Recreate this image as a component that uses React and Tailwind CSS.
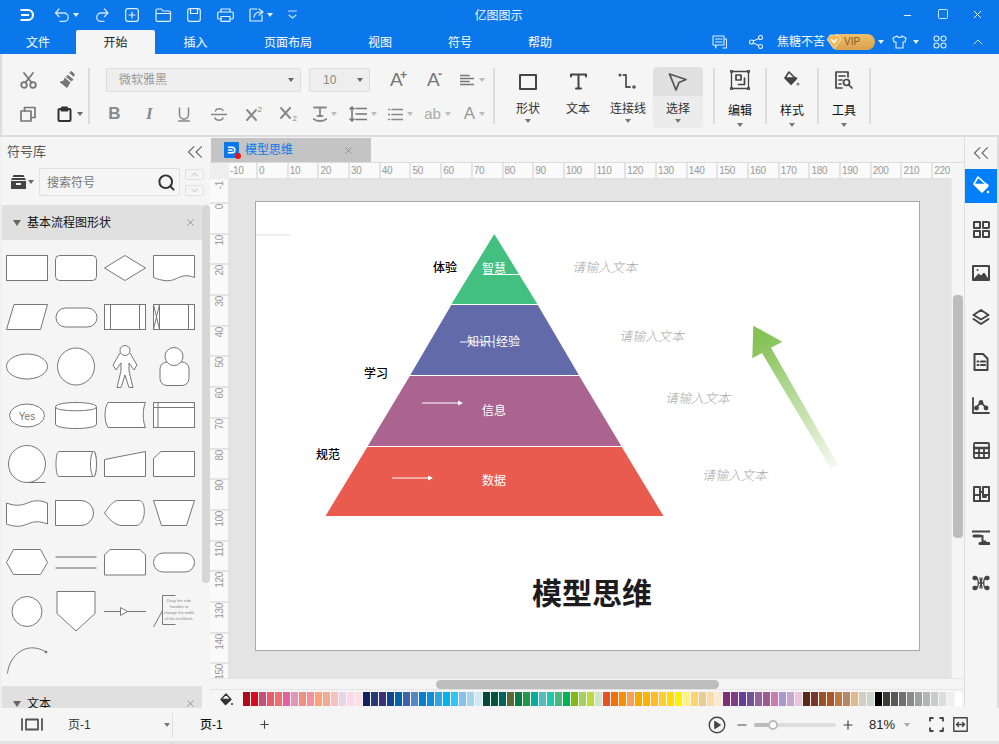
import {
  ChevronUp,
  ChevronDown,
  ChevronsLeft,
  Minus,
  Plus,
  Search,
  Square,
  X,
} from "lucide-react";

const tabs = [
  { label: "文件", w: "w-[76px]" },
  { label: "开始", w: "w-[79px]", active: true },
  { label: "插入", w: "w-[81px]" },
  { label: "页面布局", w: "w-[104px]" },
  { label: "视图", w: "w-[80px]" },
  { label: "符号", w: "w-[80px]" },
  { label: "帮助", w: "w-[80px]" },
];

const swatches = [
  "#b20a1c", "#d90b1f", "#c7507a", "#e85a6c", "#ef7074", "#e75fa0", "#e295b4", "#ef8f85", "#f3919c", "#ffa17a", "#f2ab90", "#f7c1bd", "#ead4e8", "#fdd8e8", "#fce0e6",
  "#12225a", "#263a75", "#3c3078", "#0c468e", "#0265a5", "#3f63ac", "#5587c5", "#0a7ece", "#0f8dd6", "#2ba7e2", "#02b2f0", "#30c4f6", "#8bc0e8", "#a0d6ef", "#cfe9f5",
  "#004838", "#04553a", "#01655f", "#596b30", "#0b7b48", "#229848", "#04ad9c", "#54bcbf", "#1ccba9", "#4ab97f", "#02b153", "#84b816", "#a4d063", "#bfd83e", "#cde7c6",
  "#e75223", "#f56f02", "#f68f06", "#f6a059", "#f6ab00", "#ffb100", "#ffbc29", "#fccf30", "#ffdb00", "#fff000", "#fef382", "#fed468", "#ebcb94", "#fddba6", "#fee8d0",
  "#7c2f76", "#833a85", "#65409b", "#72529b", "#95649f", "#9c5a8d", "#c97bae", "#ab96d2", "#c6a6cd", "#ecc5de",
  "#5b2818", "#78392c", "#9a5327", "#aa5528", "#c07a40", "#b58768", "#e0b98b", "#d4cdc4", "#cbd6cb",
  "#000000", "#3e3a39", "#595757", "#717071", "#898989", "#9fa0a0", "#b5b5b6", "#c9caca", "#dcdddd", "#efefef", "#ffffff",
];

const hLabels = ["0", "10", "20", "30", "40", "50", "60", "70", "80", "90", "100", "110", "120", "130", "140", "150", "160", "170", "180", "190", "200", "210", "220"];
const vLabels = ["0", "10", "20", "30", "40", "50", "60", "70", "80", "90", "100", "110", "120", "130", "140", "150"];

function Caret({ color = "border-t-[#888]" }) {
  return <span className={`inline-block w-0 h-0 border-x-[3px] border-x-transparent border-t-[4px] ${color}`} />;
}

function Ico({ w = 18, h = 18, vb, stroke = "#555", sw = 1.6, children, fill = "none" }) {
  return (
    <svg width={w} height={h} viewBox={vb || `0 0 ${w} ${h}`} fill={fill} stroke={stroke} strokeWidth={sw} strokeLinecap="round" strokeLinejoin="round">
      {children}
    </svg>
  );
}

function Logo({ color = "#fff" }) {
  return (
    <Ico w={16} h={14} stroke={color} sw={2.2}>
      <path d="M1.5 2H9a5 5 0 0 1 0 10H1.5M2 7h8" strokeLinecap="butt" />
    </Ico>
  );
}

const shapes = [
  <rect x="0.5" y="11.5" width="41" height="25" />,
  <rect x="0.5" y="11.5" width="41" height="25" rx="4" />,
  <path d="M21 11.5 41.5 24 21 36.5 .5 24z" />,
  <path d="M.5 11.5h41v22c-8-3-12-2-18 1-8 4-15 2-23-1z" />,
  <path d="M8 11.5h33.5l-7 25H.5z" />,
  <rect x="1" y="15" width="41" height="19" rx="9.5" />,
  <g><rect x="0.5" y="11.5" width="41" height="25" /><path d="M6.5 11.5v25M35.5 11.5v25" /></g>,
  <g><rect x="0.5" y="11.5" width="41" height="25" /><path d="M6.5 11.5v25M35.5 11.5v25M.5 11.5l6 25M6.5 11.5l-6 25" /></g>,
  <ellipse cx="21" cy="24.5" rx="20.5" ry="12.5" />,
  <circle cx="21" cy="24.5" r="18.5" />,
  <g><path d="M16 11 9 23l3 5 5-7v8l-4 16.500h4L21 33l4 12.500h4L25 29v-8l5 7 3-5-7-12" /><circle cx="21" cy="8.500" r="5" /></g>,
  <g><rect x="7" y="20" width="29" height="23.500" rx="7" /><circle cx="21" cy="14.500" r="9" /></g>,
  <g><ellipse cx="21" cy="24.500" rx="17.500" ry="11.500" /><text x="21" y="28.500" textAnchor="middle" fontSize="10" fill="#777" stroke="none" fontFamily="Liberation Sans">Yes</text></g>,
  <g><path d="M.5 16c0-6 41-6 41 0v17c0 6-41 6-41 0z" /><path d="M.5 16c0 5 41 5 41 0" /></g>,
  <path d="M4 11.500h37.500c-3 6-3 19 0 25H4c-4-6-4-19 0-25z" />,
  <g><rect x="0.5" y="11.500" width="41" height="25" /><path d="M5 11.500v25M.5 16.500h41" /></g>,
  <g><circle cx="21" cy="24" r="18.500" /><path d="M21 42.500h18.500" /></g>,
  <g><path d="M4 11.500h35c3 0 3 25 0 25H4c-4 0-4-25 0-25z" /><ellipse cx="38.500" cy="24" rx="3" ry="12.500" /></g>,
  <path d="M.5 19.500 41.500 11.500v25H.5z" />,
  <path d="M8 11.500h33.500v25H.5V18.500z" />,
  <path d="M.5 14c8 3 14 3 21 0s12-3 20 0v21c-8-3-13-3-20 0s-13 3-21 0z" />,
  <path d="M.5 11.500H26a12.500 12.500 0 0 1 0 25H.5z" />,
  <path d="M14 11.500h21c8 0 7 25-3 25H18C11 36.500 5 30 .5 24 5 18 9 11.500 14 11.500z" />,
  <path d="M.5 11.500h41l-8 25H8.500z" />,
  <path d="M7.500 11.500h27l7 13-7 12h-27l-7-12z" />,
  <path d="M.5 19h41M.5 30h41" strokeWidth="1.500" stroke="#999" />,
  <path d="M6 11.500h30l5.500 5.500v20H.5V17z" />,
  <rect x="0.500" y="15" width="41" height="19" rx="9.500" />,
  <circle cx="21" cy="24.500" r="15" />,
  <path d="M2 4.500h38v22L21 44 2 26.500z" />,
  <g><path d="M0 24.500h42" /><path d="M16.500 20.500l7 4-7 4z" /></g>,
  <g>
    <path d="M22.500 8.500H9.500v29h13M9.500 23.500 .5 40" fill="none" />
    <text fontSize="4" fill="#888" stroke="none" textAnchor="middle" fontFamily="Liberation Sans">
      <tspan x="26" y="15">Drag the side</tspan>
      <tspan x="26" y="21">handles to</tspan>
      <tspan x="26" y="27">change the width</tspan>
      <tspan x="26" y="33">of the text block.</tspan>
    </text>
  </g>,
  <g><path d="M1.500 37.500C3 20 20 4 40 16" fill="none" /><circle cx="40" cy="16" r="1" fill="#666" /></g>,
];

function BigButton({ label, icon, caret = true, active, text = "text-[#333]" }) {
  return (
    <div className={`w-[50px] h-[61px] flex flex-col items-center rounded-sm ${active ? "bg-[#ececec]" : ""}`}>
      <div className={`w-full h-[29px] flex items-center justify-center rounded-t-sm ${active ? "bg-[#e0e0e0]" : ""}`}>{icon}</div>
      <span className={`mt-[3px] text-[12px] leading-[20px] ${text}`}>{label}</span>
      {caret && <span className="flex"><Caret color="border-t-[#777]" /></span>}
    </div>
  );
}

function Sep({ h = "h-[56px]" }) {
  return <div className={`w-[2px] ${h} bg-[#dcdcdc]`} />;
}

function FormatCell({ w = "w-[35px]", children, caret }) {
  return (
    <div className={`${w} flex items-center justify-center gap-[4px]`}>
      {children}
      {caret && <Caret color="border-t-[#bbb]" />}
    </div>
  );
}

function Ribbon() {
  return (
    <div className="h-[81px] flex border-l-2 border-[#dedede] bg-[#f5f5f5]">
      {/* clipboard */}
      <div className="w-[86px] h-full pt-[14px] pl-[6px] grid grid-cols-[40px_40px] grid-rows-[24px_10px_24px]">
        <div className="flex items-center justify-center">
          <Ico w={17} h={17} stroke="#777" sw={1.800}><circle cx="4" cy="13" r="2.800" /><circle cx="13" cy="13" r="2.800" /><path d="M5.500 10.500 13 1M11.500 10.500 4 1" /></Ico>
        </div>
        <div className="flex items-center justify-center">
          <Ico w={18} h={18} fill="#777" stroke="#777" sw={1}><path d="M11 1.500l1.500-1 3 3-1 1.500zM9 4.500l5 4-1.500 1.500-5-4zM6 7.500l5 4-3 5-7-5.500c3 0 4-1 5-3.500z" /></Ico>
        </div>
        <div className="col-span-2" />
        <div className="flex items-center justify-center">
          <Ico w={16} h={16} stroke="#777" sw={1.700}><rect x="1" y="5" width="10" height="10" /><path d="M4.500 5V1.500H15v10h-4" /></Ico>
        </div>
        <div className="flex items-center justify-center gap-[5px] pl-[3px]">
          <Ico w={15} h={16} stroke="#333" sw={2}><rect x="1.500" y="3" width="12" height="12" rx="1" /><path d="M5 3V1.500h5V3" /><path d="M4.500 4.500h6" /></Ico>
          <Caret color="border-t-[#666]" />
        </div>
      </div>
      <Sep h="h-[56px] mt-[14px]" />
      {/* font */}
      <div className="w-[403px] h-full pt-[14px] flex flex-col">
        <div className="h-[24px] flex items-center pl-[16px]">
          <div className="w-[195px] h-[24px] flex items-center justify-between pl-[12px] pr-[6px] bg-[#eeeeee] border border-[#dddddd] rounded-[2px] text-[12px] text-[#999]">
            <span>微软雅黑</span>
            <Caret color="border-t-[#666]" />
          </div>
          <div className="ml-[8px] w-[61px] h-[24px] flex items-center justify-between pl-[13px] pr-[6px] bg-[#eeeeee] border border-[#dddddd] rounded-[2px] text-[12px] text-[#888]">
            <span>10</span>
            <Caret color="border-t-[#666]" />
          </div>
          <div className="ml-[20px] w-[20px] relative text-[19px] leading-[22px] text-[#777]">
            A<span className="absolute left-[10px] -top-[5px] text-[12px] font-bold">+</span>
          </div>
          <div className="ml-[17px] w-[20px] relative text-[19px] leading-[22px] text-[#777]">
            A<span className="absolute left-[11px] -top-[6px] text-[12px] font-bold">-</span>
          </div>
          <div className="ml-[13px] flex items-center gap-[5px]">
            <Ico w={14} h={12} stroke="#777" sw={1.700}><path d="M0 1.500h9M0 4.500h14M0 7.500h9M0 10.500h14" /></Ico>
            <Caret color="border-t-[#bbb]" />
          </div>
        </div>
        <div className="h-[22px] mt-[11px] flex items-center pl-[7px]">
          <FormatCell><span className="text-[17px] font-bold text-[#888] font-['Liberation_Sans',sans-serif]">B</span></FormatCell>
          <FormatCell><span className="text-[17px] font-bold italic text-[#888] font-['Liberation_Serif',serif]">I</span></FormatCell>
          <FormatCell>
            <Ico w={12} h={15} stroke="#888" sw={1.500}><path d="M1.500 1v6.500a4.500 4.500 0 0 0 9 0V1M.5 14h11" /></Ico>
          </FormatCell>
          <FormatCell>
            <Ico w={16} h={15} stroke="#888" sw={1.500}><path d="M12 3.500C11 1 5 1 4.500 4M4 11c1 3 7 3 8 0M0 7.500h16" /></Ico>
          </FormatCell>
          <FormatCell>
            <span className="relative text-[#888] flex"><Ico w={17} h={14} stroke="#888" sw={1.900}><path d="M1 3l9 10M10 3 1 13" /></Ico><span className="absolute left-[12px] -top-[2px] text-[8px] leading-[10px]">2</span></span>
          </FormatCell>
          <FormatCell>
            <span className="relative text-[#888] flex"><Ico w={17} h={14} stroke="#888" sw={1.900}><path d="M1 1l9 10M10 1 1 11" /></Ico><span className="absolute left-[12px] top-[7px] text-[8px] leading-[10px]">2</span></span>
          </FormatCell>
          <FormatCell w="w-[38px]" caret>
            <Ico w={14} h={16} stroke="#888" sw={1.800}><path d="M1 1.500h12M7 1.500V10M4.500 10h5M.5 13c4 2.500 9 2.500 13 0" /></Ico>
          </FormatCell>
          <FormatCell w="w-[37px]" caret>
            <Ico w={18} h={16} stroke="#777" sw={1.600}><path d="M7 2.500h11M7 8h11M7 13.500h11M3 1v14M1 3l2-2 2 2M1 13l2 2 2-2" /></Ico>
          </FormatCell>
          <FormatCell w="w-[38px]" caret>
            <Ico w={15} h={13} stroke="#888" sw={1.600}><path d="M4 1.500h11M4 6.500h11M4 11.500h11M.5 1.500h1M.5 6.500h1M.5 11.500h1" /></Ico>
          </FormatCell>
          <FormatCell w="w-[37px]" caret><span className="text-[15px] leading-[20px] text-[#aaa]">ab</span></FormatCell>
          <FormatCell w="w-[37px]" caret><span className="text-[17px] leading-[20px] text-[#999]">A</span></FormatCell>
        </div>
      </div>
      <Sep h="h-[56px] mt-[14px]" />
      {/* big tools */}
      <div className="h-full pt-[13px] pl-[8px] flex items-start">
        <BigButton label="形状" icon={<Ico w={18} h={16} stroke="#444" sw={2}><rect x="1" y="1" width="16" height="14" /></Ico>} />
        <BigButton label="文本" caret={false} icon={<Ico w={17} h={17} stroke="#444" sw={2}><path d="M1 3.500V1.500h15v2M8.500 1.500v14M6 15.500h5" /></Ico>} />
        <BigButton label="连接线" icon={<Ico w={20} h={17} stroke="#555" sw={1.800}><path d="M5.500 2H8v12h4" /><circle cx="2" cy="2" r="1.600" fill="#555" stroke="none" /><circle cx="16" cy="14" r="1.800" fill="#555" stroke="none" /></Ico>} />
        <BigButton label="选择" active icon={<Ico w={20} h={20} stroke="#555" sw={1.800}><path d="M1.500 2 18 7.500 11 10.500 8 18z" /></Ico>} />
      </div>
      <div className="ml-[10px]"><Sep h="h-[56px] mt-[14px]" /></div>
      <BigGroup label="编辑" icon={<Ico w={20} h={20} stroke="#444" sw={1.300}><rect x="1.500" y="1.500" width="17" height="17" /><path d="M6 5h5v5H6zM14.500 8v6.500H8.500" strokeWidth="1.700" /><circle cx="1.500" cy="1.500" r="1" fill="#fff" /><circle cx="18.500" cy="1.500" r="1" fill="#fff" /><circle cx="1.500" cy="18.500" r="1" fill="#fff" /><circle cx="18.500" cy="18.500" r="1" fill="#fff" /></Ico>} />
      <Sep h="h-[56px] mt-[14px]" />
      <BigGroup label="样式" icon={<Ico w={16} h={18} stroke="#444" sw={1.600}><path d="M5 1l7 7-5 5-6-6z" /><path d="M1.500 7h11L7 13z" fill="#444" /><circle cx="14" cy="13" r="1.500" fill="#888" stroke="none" /></Ico>} />
      <Sep h="h-[56px] mt-[14px]" />
      <BigGroup label="工具" icon={<Ico w={18} h={18} stroke="#444" sw={1.700}><path d="M13 1H1v16h6M13 1v5M4 5h6M4 9h3M4 13h2" /><circle cx="11.500" cy="11.500" r="3" /><path d="M14 14l3 3" /></Ico>} />
      <Sep h="h-[56px] mt-[14px]" />
    </div>
  );
}

function BigGroup({ label, icon }) {
  return (
    <div className="w-[50px] h-full pt-[14px] flex flex-col items-center">
      <div className="h-[24px] flex items-center justify-center">{icon}</div>
      <span className="mt-[9px] text-[12px] leading-[20px] text-[#111]">{label}</span>
      <span className="flex mt-[2px]"><Caret color="border-t-[#777]" /></span>
    </div>
  );
}

function TitleBar() {
  return (
    <div className="h-[30px] flex items-center bg-[#0a78eb] text-white">
      <div className="flex-1 flex items-center">
        <span className="ml-[19px] flex"><Logo /></span>
        <span className="ml-[19px] flex"><Ico w={16} h={14} stroke="#cfe4fb" sw={1.300}><path d="M5 1 1.500 5 5 8.500M1.500 5H10a4.200 4.200 0 0 1 0 8.500H6" /></Ico></span>
        <span className="ml-[3px] flex"><Caret color="border-t-[#e5f0fd]" /></span>
        <span className="ml-[16px] flex"><Ico w={14} h={14} stroke="#cfe4fb" sw={1.300}><path d="M9.500 1 13 5 9.500 8.500M13 5H6a4.200 4.200 0 0 0 0 8.500h3" /></Ico></span>
        <span className="ml-[16px] flex"><Ico w={14} h={14} stroke="#e5f0fd" sw={1.200}><rect x=".7" y=".7" width="12.600" height="12.600" rx="2" /><path d="M7 4v6M4 7h6" /></Ico></span>
        <span className="ml-[16px] flex"><Ico w={17} h={14} stroke="#e5f0fd" sw={1.200}><path d="M1 12V2.500C1 1.500 1.500 1 2.500 1h4l1.500 2h6c1 0 1.500.5 1.500 1.500V12c0 .7-.5 1.300-1.300 1.300H2.300C1.500 13.300 1 12.700 1 12zM1 5.500h15" /></Ico></span>
        <span className="ml-[15px] flex"><Ico w={14} h={14} stroke="#e5f0fd" sw={1.200}><rect x=".7" y=".7" width="12.600" height="12.600" rx="2" /><path d="M3.500 1v4.500h7V1" /></Ico></span>
        <span className="ml-[16px] flex"><Ico w={17} h={14} stroke="#e5f0fd" sw={1.200}><path d="M4 4V1h9v3M4 11H2c-.8 0-1.300-.5-1.300-1.300V5.500c0-.8.5-1.500 1.300-1.500h13c.8 0 1.300.7 1.300 1.500v4.200c0 .8-.5 1.300-1.300 1.300h-2" /><rect x="4" y="8.500" width="9" height="4.800" /></Ico></span>
        <span className="ml-[15px] flex"><Ico w={16} h={14} stroke="#e5f0fd" sw={1.200}><path d="M8 1H1v12h12V7M5 9c.5-3.500 3-5 7-5M10 1l4 3-4 3" /></Ico></span>
        <span className="ml-[2px] flex"><Caret color="border-t-[#e5f0fd]" /></span>
        <span className="ml-[15px] flex"><Ico w={9} h={10} stroke="#cfe4fb" sw={1.100}><path d="M.5 1h8M1 5l3.500 3L8 5" /></Ico></span>
      </div>
      <span className="ml-[2px] pt-[1px] text-[12px] leading-[30px] text-[#eef6ff]">亿图图示</span>
      <div className="flex-1 flex items-center justify-end pr-[4px] pb-[2px]">
        <span className="w-[35px] flex justify-center pt-[2px]"><Minus size={11} strokeWidth={2} /></span>
        <span className="w-[35px] flex justify-center"><Square size={12} strokeWidth={1.600} /></span>
        <span className="w-[35px] flex justify-center"><X size={13} strokeWidth={1.800} /></span>
      </div>
    </div>
  );
}

function TabsRow() {
  return (
    <div className="h-[24px] flex bg-[#0a78eb] text-[12px] text-white">
      {tabs.map((t) => (
        <div
          key={t.label}
          className={`${t.w} flex items-center justify-center pt-[1px] ${t.active ? "bg-[#f5f5f5] text-[#222] rounded-t-[2px]" : ""}`}
        >
          {t.label}
        </div>
      ))}
      <div className="flex items-center">
        <span className="ml-[132px] flex"><Ico w={15} h={14} stroke="#dcebfc" sw={1.100}><path d="M1 1h11v9H4v3l-1-3H1zM3.500 4h6.500M3.500 7h6.500M13 4h1.500v9H11" /></Ico></span>
        <span className="ml-[22px] flex"><Ico w={14} h={14} stroke="#dcebfc" sw={1.100}><circle cx="2.500" cy="7" r="2" /><circle cx="11.500" cy="2.500" r="2" /><circle cx="11.500" cy="11.500" r="2" /><path d="M4.300 6 9.700 3.400M4.300 8l5.400 2.600" /></Ico></span>
        <span className="ml-[14px] w-[48px] text-[#f3f8ff]">焦糖不苦</span>
        <span className="ml-[2px] relative w-[48px] h-[16px] flex items-center justify-end">
          <span className="w-[40px] h-[16px] pl-[9px] rounded-r-full bg-gradient-to-b from-[#f0c068] to-[#d9a24f] text-[#85591a] text-[10px] leading-[16px] font-['Liberation_Sans',sans-serif]">VIP</span>
          <svg className="absolute left-0 top-0" width="14" height="16" viewBox="0 0 14 16">
            <path d="M3 1h8l3 4.500L7 15 0 5.500z" fill="#f0b955" stroke="#fff" strokeWidth=".6" />
            <path d="M4 5l3 3.500L10 5" fill="none" stroke="#fff" strokeWidth="1.600" />
          </svg>
        </span>
        <span className="ml-[3px] flex"><Caret color="border-t-[#e5f0fd]" /></span>
        <span className="ml-[8px] flex"><Ico w={15} h={14} stroke="#e5f0fd" sw={1.100}><path d="M5 1 1 3l1 4h2v6h7V7h2l1-4-4-2c-.5 2-4.500 2-5 0z" /></Ico></span>
        <span className="ml-[6px] flex"><Caret color="border-t-[#e5f0fd]" /></span>
        <span className="ml-[14px] flex"><Ico w={14} h={14} stroke="#dcebfc" sw={1.100}><rect x="1" y="1" width="5" height="5" rx="2.500" /><rect x="8" y="1" width="5" height="5" rx="2.500" /><rect x="1" y="8" width="5" height="5" rx="2.500" /><rect x="8" y="8" width="5" height="5" rx="2.500" /></Ico></span>
        <span className="ml-[23px] flex"><ChevronUp size={16} strokeWidth={1.300} color="#e5f0fd" /></span>
      </div>
    </div>
  );
}

function SymbolPanel() {
  return (
    <div className="w-[210px] h-full flex flex-col border-l-2 border-[#f0f0f0] bg-[#f5f5f5]">
      <div className="h-[31px] flex items-center justify-between pl-[5px] pr-[2px] pb-[2px]">
        <span className="text-[13px] text-[#555]">符号库</span>
        <ChevronsLeft size={26} strokeWidth={1} color="#666" />
      </div>
      <div className="h-[37px] flex items-start">
        <div className="w-[37px] h-[28px] flex items-center justify-center gap-[2px] pl-[3px]">
          <Ico w={15} h={14} stroke="none" fill="#444"><path d="M2.500 0h10l1 2h-12zM1 3h13l1 2H0zM0 6h15v8H0zM5 8v2h5V8z" /></Ico>
          <Caret color="border-t-[#666]" />
        </div>
        <div className="w-[141px] h-[28px] flex items-center justify-between pl-[7px] pr-[3px] border border-[#e0e0e0] rounded-[2px] text-[12px] text-[#777]">
          <span className="pt-[1px]">搜索符号</span>
          <Search size={19} strokeWidth={2.500} color="#333" />
        </div>
        <div className="ml-[5px] flex flex-col gap-[5px] pt-[1px]">
          <div className="w-[19px] h-[11px] flex items-center justify-center border border-[#e0e0e0] rounded-[2px]"><ChevronUp size={11} color="#777" strokeWidth={1} /></div>
          <div className="w-[19px] h-[11px] flex items-center justify-center border border-[#e0e0e0] rounded-[2px]"><ChevronDown size={11} color="#777" strokeWidth={1} /></div>
        </div>
      </div>
      <div className="flex-1 flex min-h-0 overflow-hidden">
        <div className="w-[200px] flex flex-col">
          <div className="h-[35px] shrink-0 flex items-center pl-[11px] pr-[6px] bg-[#e0e0e0] text-[12px] text-[#111]">
            <span className="w-0 h-0 border-x-[4px] border-x-transparent border-t-[6px] border-t-[#666]" />
            <span className="ml-[6px] flex-1">基本流程图形状</span>
            <X size={11} strokeWidth={1.300} color="#666" />
          </div>
          <div className="h-[446px] shrink-0 pl-[4px] pt-[3.5px] grid grid-cols-[repeat(4,42px)] gap-x-[7px] auto-rows-[49px] content-start">
            {shapes.map((s, i) => (
              <svg key={i} width="42" height="49" viewBox="0 0 42 49" fill="#fff" stroke="#777" strokeWidth="1" className="overflow-visible">
                {s}
              </svg>
            ))}
          </div>
          <div className="h-[35px] shrink-0 flex items-center pl-[11px] pr-[6px] bg-[#e0e0e0] text-[12px] text-[#111]">
            <span className="w-0 h-0 border-x-[4px] border-x-transparent border-t-[6px] border-t-[#666]" />
            <span className="ml-[6px] flex-1">文本</span>
            <X size={11} strokeWidth={1.300} color="#666" />
          </div>
        </div>
        <div className="w-[8px]">
          <div className="h-[378px] bg-[#d6d6d6] rounded-full" />
        </div>
      </div>
    </div>
  );
}

function DiagramPage() {
  return (
    <div className="relative w-[665px] h-[450px] bg-white border border-[#aaaaaa] text-[12px] overflow-hidden">
      <svg className="absolute inset-0" width="663" height="448" viewBox="256 202 663 448" fill="none">
        <defs>
          <linearGradient id="arrowFade" gradientUnits="userSpaceOnUse" x1="762" y1="340" x2="836" y2="468">
            <stop offset="0" stopColor="#86c256" />
            <stop offset="1" stopColor="#86c256" stopOpacity="0.08" />
          </linearGradient>
        </defs>
        <path d="M256 235h34" stroke="#dddddd" />
        <path d="M494.300 234 537.300 304H451.500z" fill="#43c080" />
        <path d="M451.300 305H537.800L578.800 375H410.300z" fill="#626aa9" />
        <path d="M409.800 376H579.300L621.300 446H367.800z" fill="#ab6390" />
        <path d="M367.300 447H621.800L663.500 516H325.500z" fill="#e95b4f" />
        <path d="M483 274.500h37M460 342h34M494 335v13" stroke="#fff" />
        <path d="M422 403h36M392 478h36" stroke="#fff" />
        <path d="M458 400.500 463 403l-5 2.500zM428 475.500l5 2.500-5 2.500z" fill="#fff" />
        <path d="M753.300 325.700 782.300 341.700 771 347.700 838 465 831 469 762 353 752.300 358.300z" fill="url(#arrowFade)" />
      </svg>
      <div className="absolute left-[226px] top-[57px] leading-[20px] text-white">智慧</div>
      <div className="absolute left-[211px] top-[130px] leading-[20px] text-white flex gap-[5px]"><span>知识</span><span>经验</span></div>
      <div className="absolute left-[226px] top-[199px] leading-[20px] text-white">信息</div>
      <div className="absolute left-[226px] top-[269px] leading-[20px] text-white">数据</div>
      <div className="absolute left-[177px] top-[56px] leading-[20px] font-medium text-black">体验</div>
      <div className="absolute left-[108px] top-[162px] leading-[20px] font-medium text-black">学习</div>
      <div className="absolute left-[60px] top-[243px] leading-[20px] font-medium text-black">规范</div>
      <div className="absolute left-[316px] top-[56px] text-[13px] leading-[20px] italic font-light text-[#aaaaaa]">请输入文本</div>
      <div className="absolute left-[363px] top-[125px] text-[13px] leading-[20px] italic font-light text-[#aaaaaa]">请输入文本</div>
      <div className="absolute left-[409px] top-[187px] text-[13px] leading-[20px] italic font-light text-[#aaaaaa]">请输入文本</div>
      <div className="absolute left-[446px] top-[264px] text-[13px] leading-[20px] italic font-light text-[#aaaaaa]">请输入文本</div>
      <div className="absolute left-[276px] top-[370px] text-[30px] leading-[44px] font-bold text-[#1c1c1c]">模型思维</div>
    </div>
  );
}

function Workspace() {
  return (
    <div className="flex-1 h-full min-w-0 flex flex-col">
      <div className="h-[26px] flex bg-[#f5f5f5] border-b border-[#dddddd]">
        <div className="ml-[1px] mt-[1px] w-[160px] h-[24px] flex items-center pl-[13px] pr-[17px] bg-[#c4c4c4] text-[12px] text-[#0a78eb]">
          <span className="relative w-[15px] h-[16px] rounded-[1px] bg-[#0a78eb] flex items-center justify-center">
            <svg width="9" height="8" viewBox="0 0 16 14" fill="none" stroke="#fff" strokeWidth="2.500"><path d="M1.500 2H9a5 5 0 0 1 0 10H1.500M2 7h8" /></svg>
            <span className="absolute -right-[2px] -bottom-[1px] w-[6px] h-[6px] rounded-full bg-[#f01010]" />
          </span>
          <span className="ml-[6px] flex-1">模型思维</span>
          <X size={11} strokeWidth={1.200} color="#666" />
        </div>
      </div>
      <div className="h-[16px] flex">
        <div className="w-[19px] h-full bg-[#eeeeee]" />
        <div className="w-[722px] h-full flex overflow-hidden bg-[#fafafa] border-b border-[#e0e0e0] text-[10px] leading-[15px] tracking-[-0.3px] text-[#999] font-['Liberation_Sans',sans-serif]">
          <div className="w-[27px] shrink-0 pl-[1px]">-10</div>
          {hLabels.map((l) => (
            <div key={l} className="w-[30.7px] shrink-0 pl-[1px] border-l-2 border-[#e4e4e4]">{l}</div>
          ))}
        </div>
        <div className="flex-1 bg-[#f5f5f5]" />
      </div>
      <div className="h-[499px] flex">
        <div className="w-[19px] h-full overflow-hidden bg-[#fafafa] border-r border-[#e4e4e4] text-[10px] leading-[17px] tracking-[-0.3px] text-[#999] font-['Liberation_Sans',sans-serif]">
          <div className="h-[23px] flex items-start justify-center pt-[2px]"><span className="[writing-mode:vertical-rl] rotate-180">-1</span></div>
          {vLabels.map((l) => (
            <div key={l} className="h-[30.7px] flex items-start justify-center border-t-2 border-[#e4e4e4]"><span className="[writing-mode:vertical-rl] rotate-180">{l}</span></div>
          ))}
        </div>
        <div className="w-[722px] h-full pl-[26px] pt-[22px] bg-[#e4e4e4]">
          <DiagramPage />
        </div>
        <div className="flex-1 h-full pl-[1px] pt-[116px] bg-[#f5f5f5] border-l border-[#eaeaea]">
          <div className="w-[10px] h-[243px] rounded-[4px] bg-[#bdbdbd]" />
        </div>
      </div>
      <div className="h-[12px] flex bg-[#f5f5f5] border-y border-[#e4e4e4] pl-[226px]">
        <div className="w-[283px] h-[9px] mt-[0.5px] rounded-full bg-[#bdbdbd]" />
      </div>
      <div className="h-[18px] flex items-center bg-[#f5f5f5]">
        <div className="w-[33px] flex justify-center pr-[1px]">
          <Ico w={13} h={13} stroke="#333" sw={1.300}><path d="M6 1 1 6.500l4.500 5L11 6.500z" /><path d="M2 6.500h8l-4.500 4.500z" fill="#333" /><circle cx="12" cy="11" r="1" fill="#333" stroke="none" /></Ico>
        </div>
        <div className="flex gap-[1px]">
          {swatches.map((c, i) => (
            <span key={i} className="w-[7px] h-[14px]" style={{ backgroundColor: c }} />
          ))}
        </div>
      </div>
    </div>
  );
}

const rightIcons = [
  <Ico key="a" w={18} h={18} stroke="#444" sw={2}><rect x="2" y="2" width="6" height="6" /><rect x="11" y="2" width="6" height="6" strokeDasharray="5 1.500" /><rect x="2" y="11" width="6" height="6" /><rect x="11" y="11" width="6" height="6" /></Ico>,
  <Ico key="b" w={18} h={16} stroke="#444" sw={2}><rect x="1" y="1" width="16" height="14" /><path d="M2 14l4.500-5 2.500 2 3-3 4 6z" fill="#444" strokeWidth="1" /><circle cx="5.500" cy="5" r="1" fill="#444" stroke="none" /></Ico>,
  <Ico key="c" w={18} h={18} stroke="#444" sw={2}><path d="M9 2l7.500 5L9 11.500 1.500 7z" /><path d="M1.500 11 9 16l7.500-5" /></Ico>,
  <Ico key="d" w={16} h={18} stroke="#444" sw={2}><path d="M10 1H1.500v16h13V5.500zM4.500 8.500h1M8 8.500h4M4.500 12h1M8 12h4" /></Ico>,
  <Ico key="e" w={18} h={17} stroke="#444" sw={1.800}><path d="M1 1v15h16" /><path d="M4 11l5-6 5 6" /><circle cx="4.500" cy="11" r="1.500" fill="#444" /><circle cx="9" cy="5.500" r="1.500" fill="#444" /><circle cx="14" cy="11" r="1.500" fill="#444" /></Ico>,
  <Ico key="f" w={17} h={17} stroke="#444" sw={1.800}><rect x="1" y="1" width="15" height="15" rx="1" /><path d="M1 6h15" strokeWidth="2.500" /><path d="M1 11h15M6 6v10M11 6v10" /></Ico>,
  <Ico key="g" w={17} h={16} stroke="#444" sw={2}><path d="M1 1h6v5h3V1h6v14H1zM1 9h6v6M7 9v-3M10 6v3h6M10 9v2h3" /></Ico>,
  <Ico key="h" w={18} h={16} stroke="#444" sw={2}><path d="M0 1.500h18M3 6h7.500v5.500h3" /><path d="M8 13.500h9" strokeWidth="3" /><path d="M2 6h6" strokeWidth="3" /></Ico>,
  <Ico key="i" w={18} h={16} stroke="#444" sw={1.300}><path d="M4 3c3 0 3 10 0 10M14 3c-3 0-3 10 0 10M6.500 8h5M8 3l2 10M10 3 8 13" /><rect x="1" y="1.500" width="4" height="3" rx="1.500" fill="#444" /><rect x="13" y="1.500" width="4" height="3" rx="1.500" fill="#444" /><rect x="1" y="11.500" width="4" height="3" rx="1.500" fill="#444" /><rect x="13" y="11.500" width="4" height="3" rx="1.500" fill="#444" /></Ico>,
];

function RightRail() {
  return (
    <div className="w-[35px] h-full flex flex-col bg-[#f5f5f5] border-l border-r-2 border-[#dddddd]">
      <div className="h-[32px] flex items-center justify-center"><ChevronsLeft size={26} strokeWidth={1} color="#666" /></div>
      <div className="w-[32px] h-[34px] flex items-center justify-center bg-[#0080ff]">
        <Ico w={18} h={20} stroke="#fff" sw={1.600}><path d="M6 1l10 9-6 6-8-8z" /><path d="M2.500 8.500h13L10 15.500z" fill="#fff" /><circle cx="16" cy="16" r="1.300" fill="#fff" stroke="none" /></Ico>
      </div>
      <div className="pt-[4px] flex flex-col">
        {rightIcons.map((icon, i) => (
          <div key={i} className="h-[44.2px] flex items-center justify-center">{icon}</div>
        ))}
      </div>
    </div>
  );
}

function StatusBar() {
  return (
    <div className="h-[33px] flex items-center bg-[#f5f5f5] text-[12px] text-[#333]">
      <span className="ml-[21px] flex"><Ico w={22} h={13} stroke="#555" sw={1.800}><rect x="5" y="1.500" width="12" height="10" /><path d="M1 1v11M21 1v11" /></Ico></span>
      <span className="ml-[25px] w-[24px] pt-[1px]">页-1</span>
      <span className="ml-[72px] flex"><Caret color="border-t-[#777]" /></span>
      <span className="ml-[2px] w-[1px] h-[24px] bg-[#dddddd]" />
      <span className="ml-[27px] w-[24px] pt-[1px] font-medium text-[#111]">页-1</span>
      <span className="ml-[34px] flex"><Plus size={13} strokeWidth={2} color="#444" /></span>
      <div className="flex-1" />
      <span className="flex"><Ico w={18} h={18} stroke="#444" sw={1.400}><circle cx="9" cy="9" r="7.800" /><path d="M7 5.500 12.500 9 7 12.500z" fill="#444" strokeWidth="1" /></Ico></span>
      <span className="ml-[9px] flex"><Minus size={14} strokeWidth={2} color="#444" /></span>
      <div className="ml-[5px] w-[82px] h-[4px] rounded-full bg-[#dddddd] relative">
        <div className="w-[19px] h-full rounded-full bg-[#bbbbbb]" />
        <div className="absolute left-[14px] -top-[3px] w-[10px] h-[10px] rounded-full bg-white border-2 border-[#bbbbbb]" />
      </div>
      <span className="ml-[5px] flex"><Plus size={14} strokeWidth={2} color="#444" /></span>
      <span className="ml-[14px] w-[26px] text-[13px] text-[#222]">81%</span>
      <span className="ml-[9px] flex"><Caret color="border-t-[#aaa]" /></span>
      <span className="ml-[19px] flex"><Ico w={15} h={15} stroke="#444" sw={1.800}><path d="M1 4.500V1h3.500M10.500 1H14v3.500M14 10.500V14h-3.500M4.500 14H1v-3.500" strokeLinecap="butt" /></Ico></span>
      <span className="ml-[9px] flex"><Ico w={15} h={15} stroke="#444" sw={1.400}><rect x=".8" y=".8" width="13.400" height="13.400" /><path d="M3.500 7.500h8M5.500 5.500l-2 2 2 2M9.500 5.500l2 2-2 2" /></Ico></span>
      <span className="w-[31px]" />
    </div>
  );
}

export default function App() {
  return (
    <div className="w-[999px] h-[744px] overflow-hidden flex flex-col bg-[#f5f5f5] font-['Liberation_Sans','Noto_Sans_CJK_SC',sans-serif]">
      <TitleBar />
      <TabsRow />
      <Ribbon />
      <div className="h-[573px] flex border-t-2 border-[#dddddd]">
        <SymbolPanel />
        <Workspace />
        <RightRail />
      </div>
      <StatusBar />
      <div className="h-[3px] bg-[#e2e2e2]" />
    </div>
  );
}
